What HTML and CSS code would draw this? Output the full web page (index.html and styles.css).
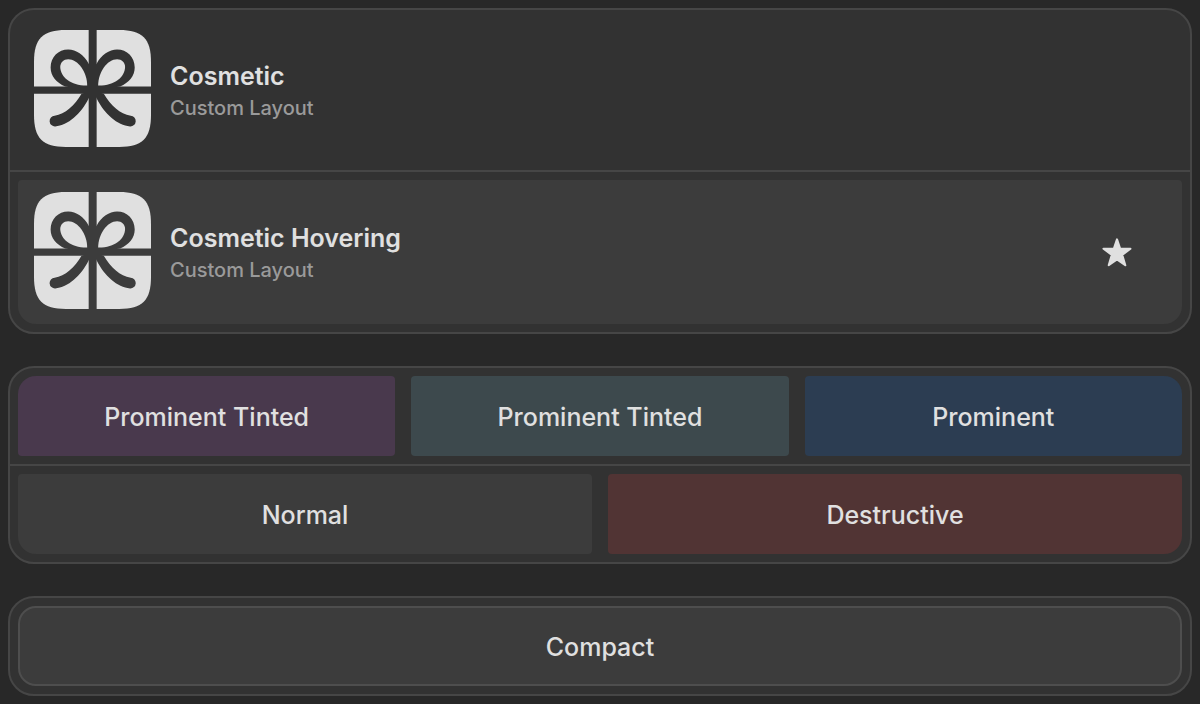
FILE: index.html
```html
<!DOCTYPE html>
<html lang="en">
<head>
<meta charset="utf-8">
<meta name="viewport" content="width=device-width, initial-scale=1">
<title>Cosmetic</title>
<link rel="stylesheet" href="styles.css">
</head>
<body>
<svg class="defs" aria-hidden="true">
  <defs>
    <mask id="ribbon" maskUnits="userSpaceOnUse" x="0" y="0" width="400" height="400">
      <rect width="400" height="400" fill="#fff"/>
      <path d="M194.5 0V400" stroke="#000" stroke-width="24"/>
      <path d="M0 200H400" stroke="#000" stroke-width="22"/>
      <g id="bow-half">
        <path fill="#000" d="M183 121C168 94 145 78 121 78C91 78 68 101 68 132C68 157 85 178 112 189L195 202V130Z"/>
        <path fill="#fff" d="M178 186C178 145 150 107 121 107C107 107 97 117 97 130C97 160 130 187 178 186Z"/>
        <path fill="#000" d="M161 211C140 247 112 272 80 277A16 16 0 0 0 82 309C120 307 160 270 182 226L195 200Z"/>
      </g>
      <use href="#bow-half" transform="translate(389 0) scale(-1 1)"/>
    </mask>
    <symbol id="gift" viewBox="18 19 352 352">
      <path fill="currentColor" mask="url(#ribbon)" d="M18 115C18 45 44 19 114 19H274C344 19 370 45 370 115V275C370 345 344 371 274 371H114C44 371 18 345 18 275Z"/>
    </symbol>
  </defs>
</svg>
<main class="page">
  <ul class="group">
    <li class="row">
      <div class="item">
        <svg class="item-icon" aria-hidden="true"><use href="#gift"/></svg>
        <div class="item-text">
          <span class="item-title">Cosmetic</span>
          <span class="item-subtitle">Custom Layout</span>
        </div>
      </div>
    </li>
    <li class="row">
      <div class="item item-hover">
        <svg class="item-icon" aria-hidden="true"><use href="#gift"/></svg>
        <div class="item-text">
          <span class="item-title">Cosmetic Hovering</span>
          <span class="item-subtitle">Custom Layout</span>
        </div>
        <button class="star" type="button" aria-label="Favorite">
          <svg class="star-icon" viewBox="0 0 86 84" aria-hidden="true"><path fill="currentColor" stroke="currentColor" stroke-width="6" stroke-linejoin="round" d="M43 4L52 31H82L58 49L67 79L43 62L19 79L28 49L4 31H34Z"/></svg>
        </button>
      </div>
    </li>
  </ul>
  <section class="group">
    <div class="row">
      <button class="button purple" type="button">Prominent Tinted</button>
      <button class="button teal" type="button">Prominent Tinted</button>
      <button class="button blue" type="button">Prominent</button>
    </div>
    <div class="row">
      <button class="button" type="button">Normal</button>
      <button class="button red" type="button">Destructive</button>
    </div>
  </section>
  <section class="group">
    <div class="row">
      <button class="button outlined" type="button">Compact</button>
    </div>
  </section>
</main>
</body>
</html>
```
FILE: styles.css
```css
* {
  box-sizing: border-box;
}

body {
  margin: 0;
  background: #282828;
  color: #e0e0e0;
  font-family: Inter, "Liberation Sans", sans-serif;
}

.defs {
  position: absolute;
  width: 0;
  height: 0;
}

.page {
  display: flex;
  flex-direction: column;
  gap: 32px;
  padding: 8px;
}

.group {
  margin: 0;
  padding: 0;
  list-style: none;
  background: #323232;
  border: 2px solid #464646;
  border-radius: 26px;
}

.row {
  display: flex;
  gap: 16px;
  padding: 8px;
}

.row + .row {
  border-top: 2px solid #464646;
}

.item {
  flex: 1;
  display: flex;
  align-items: center;
  gap: 19px;
  padding: 12px 50px 15px 16px;
  border-radius: 4px;
}

.item-hover {
  background: #3c3c3c;
}

.item-icon {
  width: 117px;
  height: 117px;
}

.item-text {
  flex: 1;
  display: flex;
  flex-direction: column;
  padding-top: 4px;
}

.item-title {
  font-size: 25px;
  font-weight: 600;
  line-height: 34px;
}

.item-subtitle {
  color: #9a9a9a;
  font-size: 20px;
  font-weight: 500;
  line-height: 30px;
}

.star {
  display: flex;
  margin: 0;
  padding: 4px 0 0;
  border: 0;
  background: none;
  color: inherit;
}

.star-icon {
  width: 30px;
  height: 29px;
}

.button {
  flex: 1 1 0;
  margin: 0;
  padding: 25px 16px 23px;
  border: 0;
  border-radius: 4px;
  background: #3c3c3c;
  color: inherit;
  font: 500 25px/32px Inter, "Liberation Sans", sans-serif;
}

.row:first-child > :first-child {
  border-top-left-radius: 18px;
}

.row:first-child > :last-child {
  border-top-right-radius: 18px;
}

.row:last-child > :first-child {
  border-bottom-left-radius: 18px;
}

.row:last-child > :last-child {
  border-bottom-right-radius: 18px;
}

.purple {
  background: #49394d;
}

.teal {
  background: #3d494d;
}

.blue {
  background: #2c3d52;
}

.red {
  background: #513434;
}

.outlined {
  padding: 23px 16px 21px;
  border: 2px solid #4e4e4e;
}
```
